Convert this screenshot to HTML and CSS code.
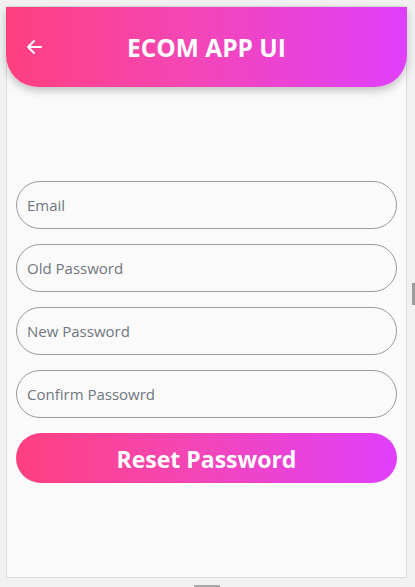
FILE: index.html
```html
<!DOCTYPE html>
<html>
<head>
<meta charset="utf-8">
<link rel="stylesheet" href="styles.css">
</head>
<body>
<div class="frame">
  <header class="appbar">
    <svg class="back" width="18" height="18" viewBox="0 0 18 18"><path d="M16 9H3M9 3L3 9l6 6" fill="none" stroke="#fff" stroke-width="2" stroke-linecap="round" stroke-linejoin="round"/></svg>
    <h1 class="title">ECOM APP UI</h1>
  </header>
  <form class="form">
    <input class="field" type="text" placeholder="Email">
    <input class="field" type="password" placeholder="Old Password">
    <input class="field" type="password" placeholder="New Password">
    <input class="field" type="password" placeholder="Confirm Passowrd">
    <button class="submit" type="button">Reset Password</button>
  </form>
</div>
<div class="scroll-thumb"></div>
<div class="handle"></div>
</body>
</html>
```
FILE: styles.css
```css
html, body {
  margin: 0;
  padding: 0;
  background: #f1f1f1;
  font-family: "Open Sans", "Noto Sans", sans-serif;
}
.frame {
  position: relative;
  box-sizing: border-box;
  width: 401px;
  height: 572px;
  margin: 6px 0 0 6px;
  background: #fafafa;
  border: 1px solid #dcdcdc;
}
.appbar {
  box-sizing: border-box;
  margin: 0 -1px;
  height: 80px;
  display: flex;
  align-items: center;
  justify-content: center;
  position: relative;
  background: linear-gradient(90deg, #ff3f7f 0%, #f446b4 45%, #e03ffc 100%);
  border-radius: 0 0 32px 32px;
  box-shadow: 0 4px 8px rgba(0,0,0,0.22);
}
.back {
  position: absolute;
  left: 19px;
  top: 31px;
}
.title {
  margin: 0;
  color: #fff;
  font-size: 24.5px;
  font-weight: 700;
  letter-spacing: 0;
}
.form {
  display: flex;
  flex-direction: column;
  gap: 15px;
  padding: 94px 9px 0 9px;
}
.field {
  box-sizing: border-box;
  height: 48px;
  border: 1px solid #9a9a9a;
  border-radius: 24px;
  background: transparent;
  padding: 0 10px;
  font-family: "Open Sans", "Noto Sans", sans-serif;
  font-size: 15px;
  outline: none;
}
.field::placeholder {
  color: #707580;
}
.submit {
  height: 50px;
  border: none;
  border-radius: 25px;
  background: linear-gradient(90deg, #ff3f7f 0%, #f446b4 45%, #e03ffc 100%);
  color: #fff;
  font-family: "Open Sans", "Noto Sans", sans-serif;
  font-size: 23px;
  font-weight: 700;
  padding: 1px 0 0 0;
}
.scroll-thumb {
  position: absolute;
  left: 412px;
  top: 283px;
  width: 3px;
  height: 22px;
  background: #9c9c9c;
}
.handle {
  position: absolute;
  left: 194px;
  top: 585px;
  width: 26px;
  height: 2px;
  background: #a8a8a8;
}
```
